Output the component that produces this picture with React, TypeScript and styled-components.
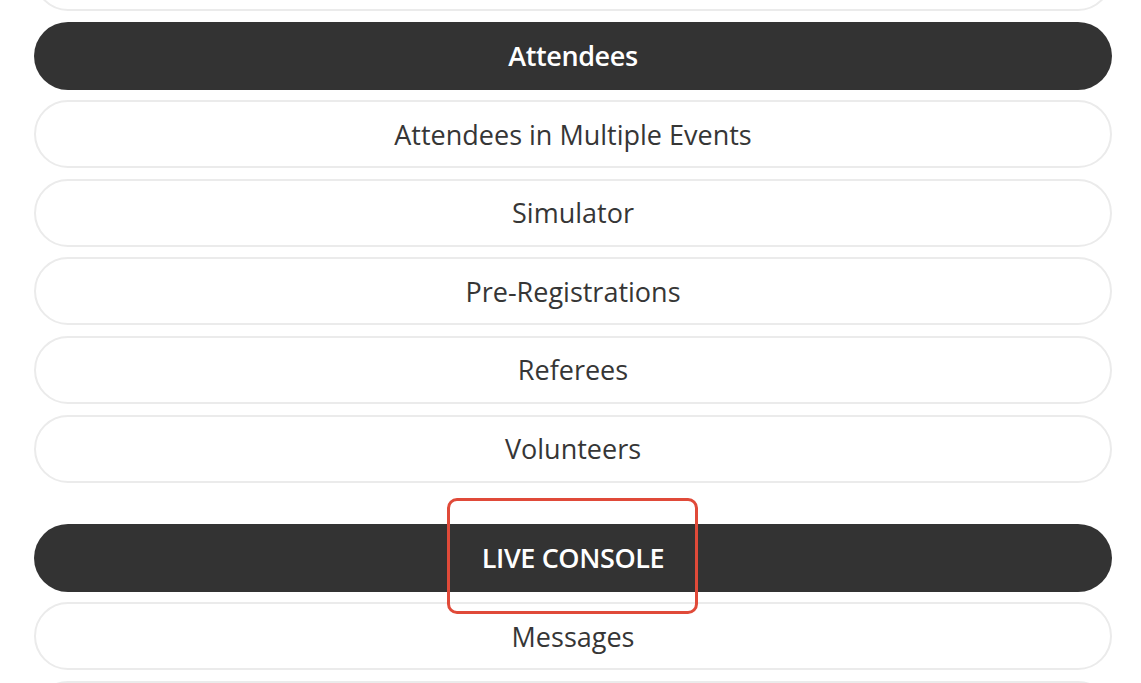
import React from 'react';
import styled, { createGlobalStyle, css } from 'styled-components';

const GlobalStyle = createGlobalStyle`
  html, body {
    margin: 0;
    padding: 0;
    background: #ffffff;
    overflow: hidden;
  }
  body {
    font-family: "Open Sans", "Noto Sans", "Liberation Sans", sans-serif;
  }
`;

const Page = styled.div`
  width: 1141px;
  height: 683px;
  overflow: hidden;
  position: relative;
  background: #ffffff;
`;

const Menu = styled.div`
  display: flex;
  flex-direction: column;
  gap: 10.6px;
  margin: -57px 29px 0 34px;
`;

const Pill = styled.div<{ $header?: boolean; $spaced?: boolean }>`
  box-sizing: border-box;
  height: 68px;
  border-radius: 34px;
  display: flex;
  align-items: center;
  justify-content: center;
  font-size: 27px;
  font-weight: 500;
  color: #363636;
  background: #ffffff;
  border: 2px solid #ebebeb;
  ${props => props.$header && css`
    background: #333333;
    border: none;
    color: #ffffff;
    font-weight: 600;
    letter-spacing: -0.4px;
  `}
  ${props => props.$spaced && css`
    margin-top: 30.5px;
  `}
`;

const Highlight = styled.div`
  position: absolute;
  left: 447px;
  top: 498px;
  width: 251px;
  height: 116px;
  box-sizing: border-box;
  border: 3px solid #e04a39;
  border-radius: 10px;
  pointer-events: none;
`;

type Item = { label: string; header?: boolean; spaced?: boolean };

const items: Item[] = [
  { label: 'Registrations' },
  { label: 'Attendees', header: true },
  { label: 'Attendees in Multiple Events' },
  { label: 'Simulator' },
  { label: 'Pre-Registrations' },
  { label: 'Referees' },
  { label: 'Volunteers' },
  { label: 'LIVE CONSOLE', header: true, spaced: true },
  { label: 'Messages' },
  { label: 'Announcements' },
];

export default function App() {
  return (
    <Page>
      <GlobalStyle />
      <Menu>
        {items.map(item => (
          <Pill key={item.label} $header={item.header} $spaced={item.spaced}>
            {item.label}
          </Pill>
        ))}
      </Menu>
      <Highlight />
    </Page>
  );
}
